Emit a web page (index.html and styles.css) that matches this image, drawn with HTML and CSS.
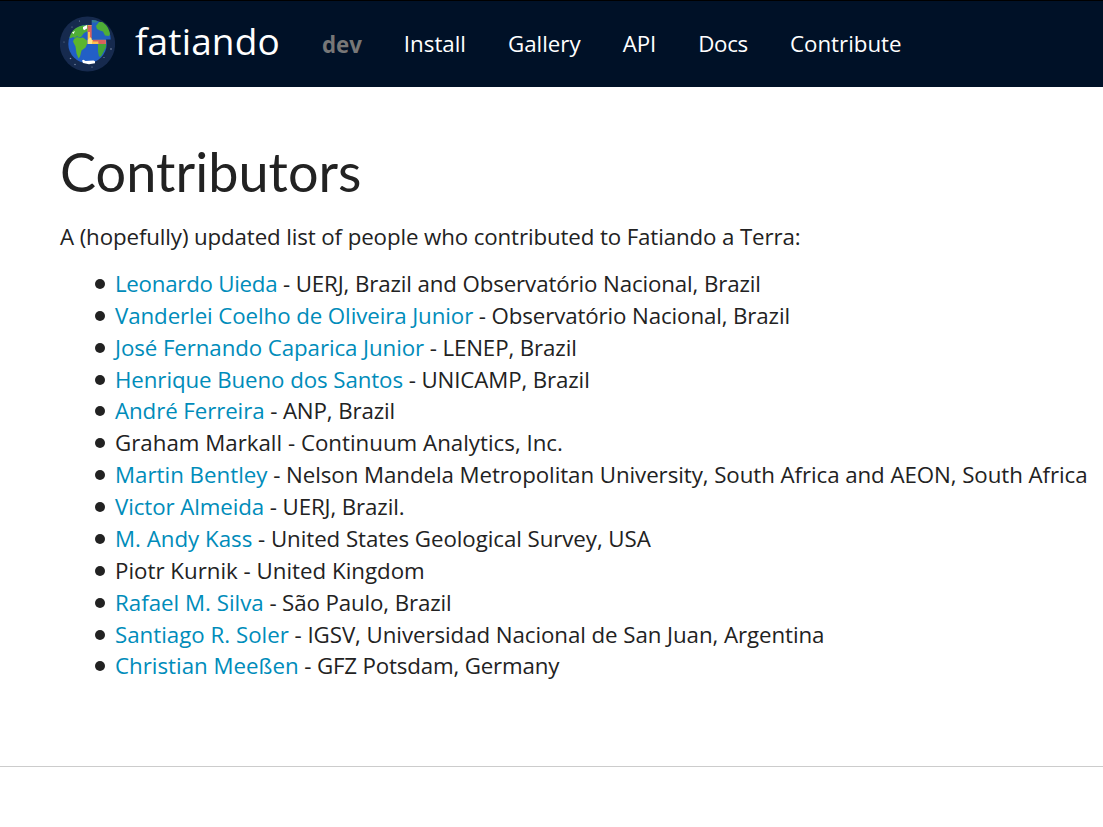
FILE: index.html
```html
<!DOCTYPE html>
<html lang="en">
<head>
<meta charset="utf-8">
<title>Contributors</title>
<link rel="stylesheet" href="styles.css">
</head>
<body>
<header class="navbar">
  <a class="brand">
    <svg class="logo" viewBox="0 0 55 56">
      <circle cx="27.500" cy="28" r="27.600" fill="#162a4e"/>
      <g fill="#8292ae"><circle cx="10.500" cy="42.500" r=".8"/><circle cx="51" cy="33" r=".8"/><circle cx="12" cy="11" r=".6"/><circle cx="19.500" cy="5" r=".6"/><circle cx="4" cy="26" r=".5"/><circle cx="44" cy="41.500" r=".6"/><circle cx="32" cy="51" r=".6"/><circle cx="15" cy="48.500" r=".7"/></g>
      <circle cx="27.500" cy="27.900" r="19.200" fill="#225fc6"/>
      <path d="M9.500 22C11 15 16 10.500 23 9.500l5-.5v6l-4 2-3 4-2 .5-2-1.500-2 2-2-1-2 1z" fill="#4fae35"/>
      <path d="M14 23l3-2 3 1 3-.500 4 3 .2 3-1.700 4-4 3-1.500 6-1.500 2-2-5-1-7-2.500-5z" fill="#5cb52d"/>
      <path d="M23 11l4-2v3.500l-3 1.800-1-1.500zM12 16.500l3-1.500-1.500 3z" fill="#fff"/>
      <path d="M38 28h8v3l-2 4-3 5.500h-2l-1-5z" fill="#43a438"/>
      <path d="M22 44.500l1.500-.8 2 1.300 8-.5 1.500.7v2l-6 1-6-1.200z" fill="#fff"/>
      <path d="M27.700 9H32v14.700h13.700v4.300h-18z" fill="#ffc24e"/>
      <path d="M27.700 9.500H32V16h-4.300zM30 16h2v6h-2zM38 23.700h7.700V28h-7.200zM33 23.700h5v1.800h-5z" fill="#d9605e"/>
      <path d="M27.700 24l2.500-3 1.800 2.700v4.300h-4.300z" fill="#ffe487"/>
      <path d="M31.700 4c10.500 0 19 8.500 19 19.500h-19z" fill="#235fc0"/>
      <path d="M36 10l3-4h3c4 2 7 6 8 12l-1 2-4-.5-2-4-3-1-3-1.500z" fill="#4fae37"/>
      <path d="M32 4l4 .4 2 1-2 1.200h-4z" fill="#347d8b"/>
    </svg>
    <span class="brand-name">fatiando</span>
  </a>
  <nav class="links">
    <a class="version">dev</a><a>Install</a><a>Gallery</a><a class="snug">API</a><a class="compact">Docs</a><a>Contribute</a>
  </nav>
</header>
<main class="content">
  <h1>Contributors</h1>
  <p>A (hopefully) updated list of people who contributed to Fatiando a Terra:</p>
  <ul>
    <li><a class="compact">Leonardo Uieda</a> - UERJ, Brazil and Observatório Nacional, Brazil</li>
    <li><a class="snug">Vanderlei Coelho de Oliveira Junior</a> - Observatório Nacional, Brazil</li>
    <li><a class="snug">José Fernando Caparica Junior</a> - LENEP, Brazil</li>
    <li><a class="snug">Henrique Bueno dos Santos</a> - UNICAMP, Brazil</li>
    <li><a class="snug">André Ferreira</a> - ANP, Brazil</li>
    <li class="natural">Graham Markall - Continuum Analytics, Inc.</li>
    <li class="loose"><a>Martin Bentley</a> - Nelson Mandela Metropolitan University, South Africa and AEON, South Africa</li>
    <li><a class="snug">Victor Almeida</a> - UERJ, Brazil.</li>
    <li class="loose"><a>M. Andy Kass</a> - United States Geological Survey, USA</li>
    <li class="natural">Piotr Kurnik - United Kingdom</li>
    <li><a>Rafael M. Silva</a> - São Paulo, Brazil</li>
    <li class="loose"><a>Santiago R. Soler</a> - IGSV, Universidad Nacional de San Juan, Argentina</li>
    <li class="tight"><a>Christian Meeßen</a> - GFZ Potsdam, Germany</li>
  </ul>
</main>
<footer class="footer"></footer>
</body>
</html>
```
FILE: styles.css
```css
* { box-sizing: border-box; }
body {
  margin: 0;
  background: #fff;
  color: #222;
  font: 22.3px/31.86px "Open Sans", sans-serif;
  overflow: hidden;
}
.navbar {
  display: flex;
  height: 87px;
  padding-left: 60px;
  background: #001127;
  border-top: 1px solid #000;
  color: #fff;
}
.brand {
  display: flex;
  align-items: center;
  gap: 20px;
}
.logo { width: 55px; height: 56px; }
.brand-name {
  font-size: 37px;
  font-weight: 400;
  line-height: 50px;
  padding-bottom: 6px;
  letter-spacing: .15px;
}
.links {
  display: flex;
  align-items: center;
  gap: 42px;
  margin-left: 42px;
}
.version { font-weight: 700; color: #777; padding-top: 2px; }
.content { padding: 56px 0 0 60px; }
h1 {
  margin: 0 0 20px;
  font: 400 54px/58px Lato, sans-serif;
  letter-spacing: .05px;
}
p {
  margin: 0 0 15.2px;
  letter-spacing: -.12px;
}
ul {
  margin: 0;
  padding-left: 55px;
  white-space: nowrap;
  list-style: none;
}
li { letter-spacing: -.12px; }
li::before {
  content: "";
  display: inline-block;
  width: 10px;
  height: 10px;
  margin: 0 10.500px 3px -20.500px;
  border-radius: 50%;
  background: #222;
}
li a { color: #008cba; letter-spacing: 0; }
.natural { letter-spacing: 0; }
.loose { letter-spacing: -.07px; }
.tight { letter-spacing: -.17px; }
.snug { letter-spacing: -.09px; }
.compact { letter-spacing: -.27px; }
.footer {
  margin-top: 83.800px;
  border-top: 1px solid #ccc;
}
```
